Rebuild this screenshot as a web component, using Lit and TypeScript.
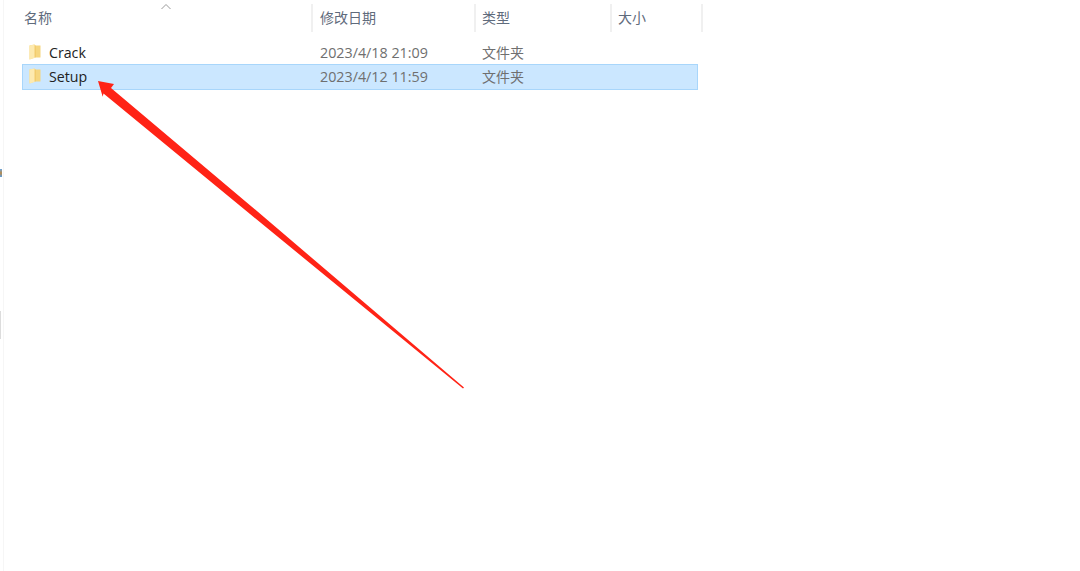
import { LitElement, html, css, svg } from "lit";
import { customElement } from "lit/decorators.js";

const folder = svg`<svg class="folder" width="12" height="16" viewBox="0 0 12 16" aria-hidden="true">
  <path d="M0.500 1.500 5.500 0.500 6.500 1.500h5v12H6L0.500 15.500Z" fill="#f6d67f"/>
  <path d="M5.500 1.500h1v12h-1Z" fill="#eec25f"/>
  <path d="M0.500 1.500 5.500 0.500V14L0.500 15.500Z" fill="#fdeab0"/>
</svg>`;

@customElement("app-root")
export class AppRoot extends LitElement {
  static styles = css`
    :host {
      display: block;
      position: relative;
      width: 1080px;
      height: 571px;
      overflow: hidden;
      background: #fff;
      font-family: "Open Sans", "Noto Sans CJK SC", sans-serif;
      font-size: 14px;
    }
    .page {
      height: 100%;
      box-sizing: border-box;
      margin-left: 3px;
      border-left: 1px solid #f6f6f6;
      padding-top: 4px;
      padding-left: 18px;
    }
    .head {
      display: grid;
      grid-template-columns: 291px 163px 136px 91px;
      height: 28px;
      width: 681px;
      margin-bottom: 9px;
      color: #5f6b7c;
    }
    .head span {
      border-right: 2px solid #f0f0f0;
      line-height: 28px;
      padding-left: 6px;
    }
    .head span:first-child { padding-left: 2px; }
    .head span:nth-child(2) { padding-left: 7px; }
    .row {
      display: grid;
      grid-template-columns: 291px 163px 136px 84px;
      width: 676px;
      box-sizing: border-box;
      height: 24px;
      align-items: center;
      color: #6f6f6f;
      border: 1px solid transparent;
      line-height: 22px;
    }
    .row.sel {
      height: 26px;
      background: #cbe7ff;
      border-color: #a8d6fb;
      margin-top: -1px;
    }
    .name {
      display: flex;
      align-items: center;
      gap: 8px;
      padding-left: 6px;
      color: #222;
      font-size: 14.2px;
    }
    .date { padding-left: 6px; font-size: 14.3px; }
    .type { padding-left: 5px; }
    .folder { flex: none; margin-top: -3px; }
    .arrow { position: absolute; left: 0; top: 0; pointer-events: none; }
    .sort { position: absolute; left: 160px; top: 3px; }
    .mark { position: absolute; left: 0; width: 2px; }
    .mark.a { top: 169px; height: 8px; background: linear-gradient(#6aa6e0, #b98a4a 50%, #5a9ee0); }
    .mark.b { top: 311px; height: 28px; width: 1px; background: #dcdcdc; }
  `;

  render() {
    return html`
      <div class="page">
        <div class="head">
          <span>名称</span><span>修改日期</span><span>类型</span><span>大小</span>
        </div>
        <div class="row">
          <div class="name">${folder}Crack</div>
          <span class="date">2023/4/18 21:09</span><span class="type">文件夹</span>
        </div>
        <div class="row sel">
          <div class="name">${folder}Setup</div>
          <span class="date">2023/4/12 11:59</span><span class="type">文件夹</span>
        </div>
      </div>
      <svg class="sort" width="12" height="8" viewBox="0 0 12 8" aria-hidden="true">
        <path d="M1.500 6 6 1.500 10.500 6" fill="none" stroke="#9a9a9a" stroke-width="1"/>
      </svg>
      <i class="mark a"></i><i class="mark b"></i>
      <svg class="arrow" width="1080" height="571" viewBox="0 0 1080 571" aria-hidden="true">
        <path d="M98 81 114 84 111 88 250 205.200 464 387.500 463 388.500 250 214 103.500 93.500 102.700 96.700Z" fill="#ff2316"/>
      </svg>
    `;
  }
}
